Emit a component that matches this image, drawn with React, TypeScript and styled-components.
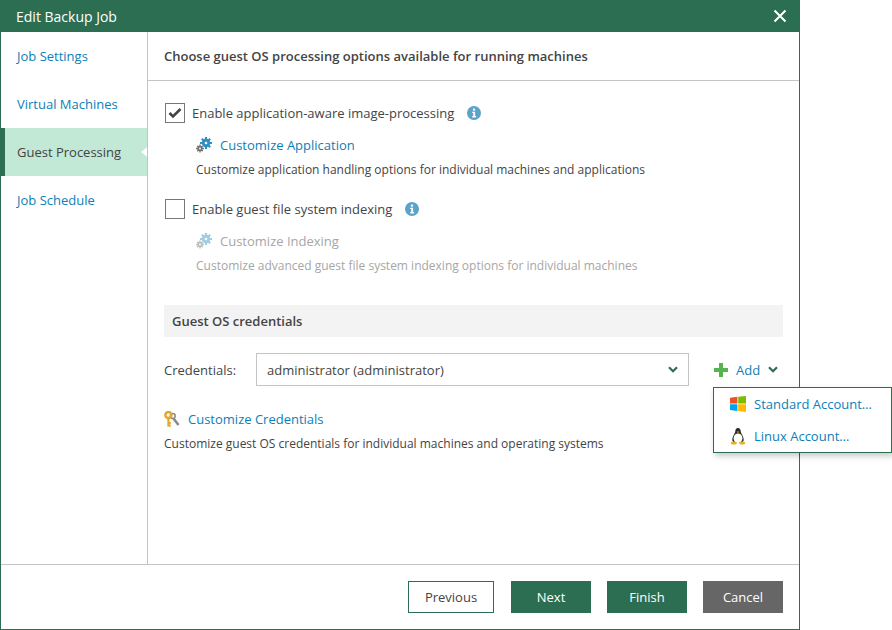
import styled, { createGlobalStyle } from "styled-components";

const GREEN = "#2b6e52";
const LINK = "#0d80b8";

const GlobalStyle = createGlobalStyle`
  html, body {
    margin: 0;
    padding: 0;
    background: #fff;
    overflow: hidden;
  }
  body {
    font-family: "Open Sans", "Noto Sans", sans-serif;
    font-size: 13px;
    color: #444;
  }
`;

const Dialog = styled.div`
  position: relative;
  box-sizing: border-box;
  width: 800px;
  height: 630px;
  display: flex;
  flex-direction: column;
  border: solid ${GREEN};
  border-width: 0 1px 1px 1px;
`;

const TitleBar = styled.div`
  height: 32px;
  margin: 0 -1px;
  padding: 0 16px 0 16px;
  flex: none;
  display: flex;
  align-items: center;
  justify-content: space-between;
  background: ${GREEN};
  color: #fff;
  font-size: 14px;
`;

const CloseIcon = styled.svg`
  width: 14px;
  height: 14px;
  margin-right: -3px;
`;

const Body = styled.div`
  flex: 1;
  display: flex;
  min-height: 0;
`;

const Sidebar = styled.nav`
  width: 146px;
  flex: none;
  border-right: 1px solid #c4c4c4;
`;

const NavItem = styled.div<{ $active?: boolean }>`
  position: relative;
  height: 48px;
  box-sizing: border-box;
  display: flex;
  align-items: center;
  padding-left: ${(p) => (p.$active ? "12px" : "16px")};
  color: ${(p) => (p.$active ? "#444" : LINK)};
  background: ${(p) => (p.$active ? "#c2e8d6" : "transparent")};
  border-left: ${(p) => (p.$active ? `4px solid ${GREEN}` : "0")};
`;

const NavArrow = styled.span`
  position: absolute;
  right: 0;
  top: 19px;
  width: 0;
  height: 0;
  border-top: 5px solid transparent;
  border-bottom: 5px solid transparent;
  border-right: 6px solid #fff;
`;

const Content = styled.main`
  flex: 1;
  display: flex;
  flex-direction: column;
  min-width: 0;
`;

const Heading = styled.div`
  height: 49px;
  flex: none;
  box-sizing: border-box;
  padding: 0 16px;
  display: flex;
  align-items: center;
  border-bottom: 1px solid #c4c4c4;
  font-weight: 600;
  color: #444;
`;

const Panel = styled.div`
  flex: 1;
  padding: 22px 16px 0 16px;
  display: flex;
  flex-direction: column;
`;

const CheckRow = styled.div`
  display: flex;
  align-items: center;
  height: 20px;
  gap: 7px;
  margin-left: 1px;
`;

const CheckBox = styled.span`
  width: 20px;
  height: 20px;
  box-sizing: border-box;
  border: 1px solid #777;
  display: flex;
  align-items: center;
  justify-content: center;
  flex: none;
`;

const InfoIcon = styled.svg`
  width: 14px;
  height: 14px;
  margin-left: 6px;
`;

const LinkRow = styled.div<{ $disabled?: boolean; $indent?: boolean }>`
  display: flex;
  align-items: center;
  gap: 8px;
  height: 20px;
  margin: 12px 0 0 ${(p) => (p.$indent ? "32px" : "0")};
  color: ${(p) => (p.$disabled ? "#a6a6a6" : LINK)};
`;

const Hint = styled.div<{ $disabled?: boolean; $indent?: boolean }>`
  margin: 5px 0 0 ${(p) => (p.$indent ? "32px" : "0")};
  height: 20px;
  line-height: 20px;
  font-size: 12px;
  color: ${(p) => (p.$disabled ? "#a6a6a6" : "#444")};
`;

const SpacedRow = styled.div`
  margin-top: 19px;
`;

const SectionBar = styled.div`
  margin-top: 29px;
  height: 32px;
  padding: 0 8px;
  display: flex;
  align-items: center;
  background: #f3f3f3;
  font-weight: 600;
  color: #444;
`;

const CredRow = styled.div`
  margin-top: 16px;
  display: flex;
  align-items: center;
  height: 33px;
`;

const CredLabel = styled.span`
  width: 92px;
  flex: none;
`;

const Select = styled.div`
  width: 433px;
  height: 33px;
  box-sizing: border-box;
  flex: none;
  border: 1px solid #c4c4c4;
  padding: 0 10px 0 10px;
  display: flex;
  align-items: center;
  justify-content: space-between;
`;

const AddButton = styled.div`
  margin-left: 25px;
  display: flex;
  align-items: center;
  color: ${LINK};
`;

const AddLabel = styled.span`
  margin: 0 8px 0 8px;
`;

const CredLink = styled(LinkRow)`
  margin-top: 23px;
  gap: 8px;
`;

const Footer = styled.footer`
  height: 65px;
  flex: none;
  box-sizing: border-box;
  border-top: 1px solid #c4c4c4;
  padding: 16px 16px 0 0;
  display: flex;
  justify-content: flex-end;
  gap: 16px;
`;

const Button = styled.button<{ $variant: "outline" | "primary" | "grey" }>`
  width: ${(p) => (p.$variant === "outline" ? "86px" : "80px")};
  margin-right: ${(p) => (p.$variant === "outline" ? "1px" : "0")};
  height: 32px;
  box-sizing: border-box;
  font: inherit;
  padding: 0;
  border: 1px solid ${(p) => (p.$variant === "grey" ? "#666" : GREEN)};
  color: ${(p) => (p.$variant === "outline" ? "#444" : "#fff")};
  background: ${(p) =>
    p.$variant === "outline" ? "#fff" : p.$variant === "grey" ? "#666" : GREEN};
`;

const Menu = styled.div`
  position: absolute;
  left: 713px;
  top: 387px;
  width: 179px;
  height: 66px;
  box-sizing: border-box;
  background: #fff;
  border: 1px solid ${GREEN};
  box-shadow: 2px 3px 6px rgba(0, 0, 0, 0.22);
  display: flex;
  flex-direction: column;
`;

const MenuItem = styled.div`
  height: 32px;
  display: flex;
  align-items: center;
  gap: 8px;
  padding-left: 16px;
  color: ${LINK};
`;

const Gears = ({ muted }: { muted?: boolean }) => (
  <svg width="16" height="16" viewBox="0 0 16 16" style={{ opacity: muted ? 0.45 : 1 }}>
    <circle cx="10" cy="6" r="4.200" fill="#2f8fc4" />
    <path
      d="M10 0v12M4 6h12M5.800 1.800l8.400 8.400M14.200 1.800l-8.400 8.400"
      stroke="#2f8fc4"
      strokeWidth="2.200"
    />
    <circle cx="10" cy="6" r="1.300" fill="#fff" />
    <circle cx="4" cy="11.500" r="3.900" fill="#fff" />
    <path
      d="M4 7.600v7.800M.1 11.500h7.800M1.300 8.800l5.400 5.400M6.700 8.800l-5.400 5.400"
      stroke="#6f6f6f"
      strokeWidth="1.400"
    />
    <circle cx="4" cy="11.500" r="2.600" fill="#6f6f6f" />
    <circle cx="4" cy="11.500" r="1" fill="#fff" />
  </svg>
);

const Info = () => (
  <InfoIcon viewBox="0 0 14 14">
    <circle cx="7" cy="7" r="7" fill="#5aa3c9" />
    <rect x="5.900" y="2.600" width="2.200" height="2" fill="#fff" />
    <path d="M5.200 5.700h2.900v4.400h1v1.300H5.200v-1.300h1V7H5.200z" fill="#fff" />
  </InfoIcon>
);

const Chevron = () => (
  <svg width="10" height="7" viewBox="0 0 10 7">
    <path d="M1 1.200l4 4 4-4" fill="none" stroke={GREEN} strokeWidth="2.200" />
  </svg>
);

const Keys = () => (
  <svg width="16" height="16" viewBox="0 0 16 16">
    <path d="M9.500 7.500l5 6.500" stroke="#8a8a8a" strokeWidth="2.600" fill="none" />
    <circle cx="8.800" cy="5" r="2.400" fill="none" stroke="#8a8a8a" strokeWidth="1.500" />
    <path d="M4.400 6v9.500M4.400 12h2.400M4.400 14.600h2.400" stroke="#e3a82b" strokeWidth="2.200" fill="none" />
    <circle cx="4.400" cy="4" r="3" fill="none" stroke="#e3a82b" strokeWidth="2.600" />
  </svg>
);

const WindowsLogo = () => (
  <svg width="16" height="16" viewBox="0 0 16 16">
    <path d="M0 1.800l7.400-1v6.700H0z" fill="#f25022" />
    <path d="M8.200.7L16 0v7.500H8.200z" fill="#7fba00" />
    <path d="M0 8.300h7.400V15L0 14z" fill="#00a4ef" />
    <path d="M8.200 8.300H16V16l-7.800-1z" fill="#ffb900" />
  </svg>
);

const Tux = () => (
  <svg width="16" height="17" viewBox="0 0 16 17">
    <path d="M8 0c1.800 0 2.700 1.400 2.700 3.200 0 2 3 4.800 3 8.800 0 2-2 3-5.700 3s-5.700-1-5.700-3c0-4 3-6.800 3-8.800C5.300 1.400 6.200 0 8 0z" fill="#2a2a2a" />
    <ellipse cx="8" cy="10.300" rx="4.400" ry="4.900" fill="#fff" />
    <path d="M6.800 3.600h2.400L8 5.200z" fill="#e8a91c" />
    <ellipse cx="3.800" cy="15" rx="3" ry="1.500" fill="#e8b31c" />
    <ellipse cx="12.200" cy="15" rx="3" ry="1.500" fill="#e8b31c" />
  </svg>
);

export default function App() {
  return (
    <>
      <GlobalStyle />
      <Dialog>
        <TitleBar>
          Edit Backup Job
          <CloseIcon viewBox="0 0 14 14">
            <path d="M1.500 1.500l11 11M12.500 1.500l-11 11" stroke="#fff" strokeWidth="2" />
          </CloseIcon>
        </TitleBar>
        <Body>
          <Sidebar>
            <NavItem>Job Settings</NavItem>
            <NavItem>Virtual Machines</NavItem>
            <NavItem $active>
              Guest Processing
              <NavArrow />
            </NavItem>
            <NavItem>Job Schedule</NavItem>
          </Sidebar>
          <Content>
            <Heading>Choose guest OS processing options available for running machines</Heading>
            <Panel>
              <CheckRow>
                <CheckBox>
                  <svg width="14" height="12" viewBox="0 0 14 12">
                    <path d="M1.500 6l3.500 3.500L12.500 2" fill="none" stroke="#444" strokeWidth="2.600" />
                  </svg>
                </CheckBox>
                Enable application-aware image-processing
                <Info />
              </CheckRow>
              <LinkRow $indent>
                <Gears />
                Customize Application
              </LinkRow>
              <Hint $indent>Customize application handling options for individual machines and applications</Hint>
              <SpacedRow>
                <CheckRow>
                  <CheckBox />
                  Enable guest file system indexing
                  <Info />
                </CheckRow>
              </SpacedRow>
              <LinkRow $indent $disabled>
                <Gears muted />
                Customize Indexing
              </LinkRow>
              <Hint $indent $disabled>
                Customize advanced guest file system indexing options for individual machines
              </Hint>
              <SectionBar>Guest OS credentials</SectionBar>
              <CredRow>
                <CredLabel>Credentials:</CredLabel>
                <Select>
                  administrator (administrator)
                  <Chevron />
                </Select>
                <AddButton>
                  <svg width="14" height="14" viewBox="0 0 14 14">
                    <path d="M5 0h4v5h5v4H9v5H5V9H0V5h5z" fill="#56b34f" />
                  </svg>
                  <AddLabel>Add</AddLabel>
                  <Chevron />
                </AddButton>
              </CredRow>
              <CredLink>
                <Keys />
                Customize Credentials
              </CredLink>
              <Hint>Customize guest OS credentials for individual machines and operating systems</Hint>
            </Panel>
          </Content>
        </Body>
        <Footer>
          <Button $variant="outline">Previous</Button>
          <Button $variant="primary">Next</Button>
          <Button $variant="primary">Finish</Button>
          <Button $variant="grey">Cancel</Button>
        </Footer>
      </Dialog>
      <Menu>
        <MenuItem>
          <WindowsLogo />
          Standard Account…
        </MenuItem>
        <MenuItem>
          <Tux />
          Linux Account…
        </MenuItem>
      </Menu>
    </>
  );
}
